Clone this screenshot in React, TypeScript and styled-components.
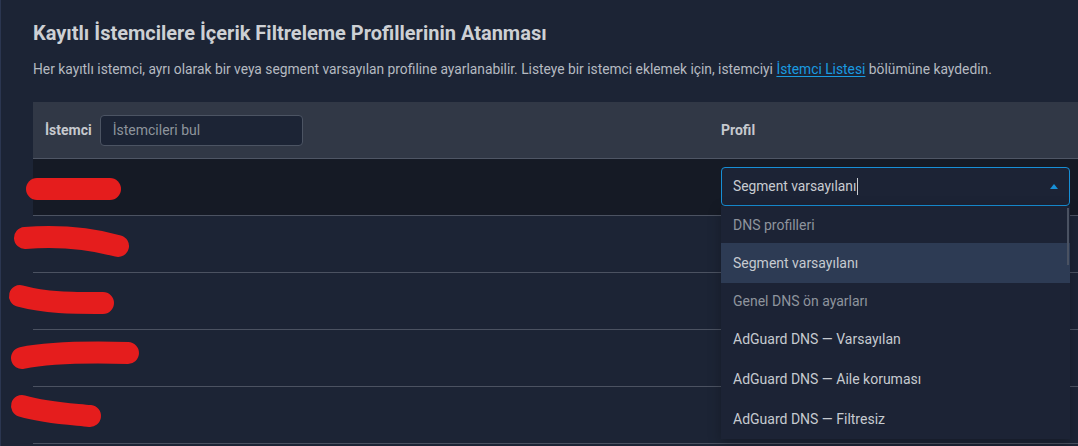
import styled, { createGlobalStyle } from "styled-components"

const GlobalStyle = createGlobalStyle`
   html, body {
      margin: 0;
      padding: 0;
      background: #1c2435;
      font-family: Roboto, "Noto Sans", "Liberation Sans", sans-serif;
      overflow: hidden;
   }
`

const StyledPage = styled.div`
   position: relative;
   min-height: 446px;
   box-sizing: border-box;
   padding: 22px 0 0 32px;
   border-left: 1px solid #2b3650;
   overflow: hidden;
`

const StyledTitle = styled.h2`
   margin: 0;
   font-size: 20px;
   line-height: 22px;
   font-weight: 700;
   color: #cdd0d4;
`

const StyledDescription = styled.p`
   margin: 15px 0 0;
   font-size: 13.8px;
   line-height: 20px;
   color: #b5bac1;
`

const StyledLink = styled.a`
   color: #1a9be0;
   text-decoration: underline;
   text-underline-offset: 2px;
`

const StyledTable = styled.div`
   margin-top: 23px;
   display: grid;
   grid-template-columns: 676px 1fr;
`

const StyledHeadCell = styled.div`
   height: 56px;
   display: flex;
   align-items: center;
   gap: 8px;
   padding: 0 12px;
   background: #313846;
   border-bottom: 1px solid #4f5665;
   font-size: 14px;
   font-weight: 700;
   color: #c6c9ce;
`

const StyledSearch = styled.input`
   width: 203px;
   height: 31px;
   box-sizing: border-box;
   padding: 0 12px;
   background: #1c2435;
   border: 1px solid #4c5463;
   border-radius: 4px;
   font-family: inherit;
   font-size: 14px;
   color: #c6c9ce;
   outline: none;
   &::placeholder {
      color: #8e949c;
   }
`

const StyledCell = styled.div<{ $active?: boolean }>`
   height: 57px;
   display: flex;
   align-items: flex-start;
   padding: 8px 8px 0 12px;
   box-sizing: border-box;
   background: ${(p) => (p.$active ? "#151a25" : "transparent")};
   border-bottom: 1px solid #4b5261;
`

const StyledSelectWrap = styled.div`
   position: relative;
   width: 349px;
`

const StyledSelect = styled.div`
   height: 39px;
   box-sizing: border-box;
   display: flex;
   align-items: center;
   justify-content: space-between;
   padding: 0 11px;
   background: #1c2335;
   border: 1px solid #178fd6;
   border-radius: 4px;
   font-size: 13.8px;
   color: #c9ccd1;
`

const StyledCaret = styled.span`
   display: inline-block;
   width: 1px;
   height: 17px;
   margin-left: 1px;
   vertical-align: middle;
   background: #c9ccd1;
`

const StyledMenu = styled.div`
   position: absolute;
   top: 39px;
   left: 0;
   right: 0;
   z-index: 2;
   padding-top: 1px;
   background: #1c2335;
   box-shadow: 0 4px 12px rgba(0, 0, 0, 0.25);
`

const StyledMenuItem = styled.div<{ $group?: boolean; $selected?: boolean }>`
   height: ${(p) => (p.$group ? "36px" : "40px")};
   display: flex;
   align-items: center;
   padding: 0 12px;
   font-size: 14px;
   color: ${(p) => (p.$group ? "#8e949d" : "#c6cad0")};
   background: ${(p) => (p.$selected ? "#2d3b54" : "transparent")};
`

const StyledScrollThumb = styled.div`
   position: absolute;
   top: 2px;
   right: 1px;
   width: 2px;
   height: 57px;
   background: #4a5262;
`

const StyledMarks = styled.svg`
   position: absolute;
   left: 0;
   top: 0;
   pointer-events: none;
`

const options = [
   { label: "DNS profilleri", group: true },
   { label: "Segment varsayılanı", selected: true },
   { label: "Genel DNS ön ayarları", group: true },
   { label: "AdGuard DNS — Varsayılan" },
   { label: "AdGuard DNS — Aile koruması" },
   { label: "AdGuard DNS — Filtresiz" },
]

// kapatılmış istemci adları
const marks = [
   "M36 189 L109 189",
   "M24 238 C50 236 80 236 117 246",
   "M19 296 C45 303 70 303 102 303",
   "M21 358 C50 352 90 352 127 353",
   "M21 406 C45 413 70 414 89 416",
]

const App = () => {
   return (
      <>
         <GlobalStyle />
         <StyledPage>
            <StyledTitle>Kayıtlı İstemcilere İçerik Filtreleme Profillerinin Atanması</StyledTitle>
            <StyledDescription>
               Her kayıtlı istemci, ayrı olarak bir veya segment varsayılan profiline ayarlanabilir. Listeye bir
               istemci eklemek için, istemciyi <StyledLink href="#">İstemci Listesi</StyledLink> bölümüne kaydedin.
            </StyledDescription>
            <StyledTable>
               <StyledHeadCell>
                  İstemci
                  <StyledSearch placeholder="İstemcileri bul" />
               </StyledHeadCell>
               <StyledHeadCell>Profil</StyledHeadCell>

               <StyledCell $active />
               <StyledCell $active>
                  <StyledSelectWrap>
                     <StyledSelect>
                        <span>
                           Segment varsayılanı
                           <StyledCaret />
                        </span>
                        <svg width="8" height="5" viewBox="0 0 8 5">
                           <path d="M4 0 L8 5 L0 5 Z" fill="#178fd6" />
                        </svg>
                     </StyledSelect>
                     <StyledMenu>
                        {options.map((o) => (
                           <StyledMenuItem key={o.label} $group={o.group} $selected={o.selected}>
                              {o.label}
                           </StyledMenuItem>
                        ))}
                        <StyledScrollThumb />
                     </StyledMenu>
                  </StyledSelectWrap>
               </StyledCell>

               {[0, 1, 2, 3].flatMap((i) => [<StyledCell key={`c${i}`} />, <StyledCell key={`p${i}`} />])}
            </StyledTable>
            <StyledMarks width="160" height="446" viewBox="0 0 160 446">
               {marks.map((d) => (
                  <path key={d} d={d} stroke="#e51d1d" strokeWidth="22" strokeLinecap="round" fill="none" />
               ))}
            </StyledMarks>
         </StyledPage>
      </>
   )
}

export default App
